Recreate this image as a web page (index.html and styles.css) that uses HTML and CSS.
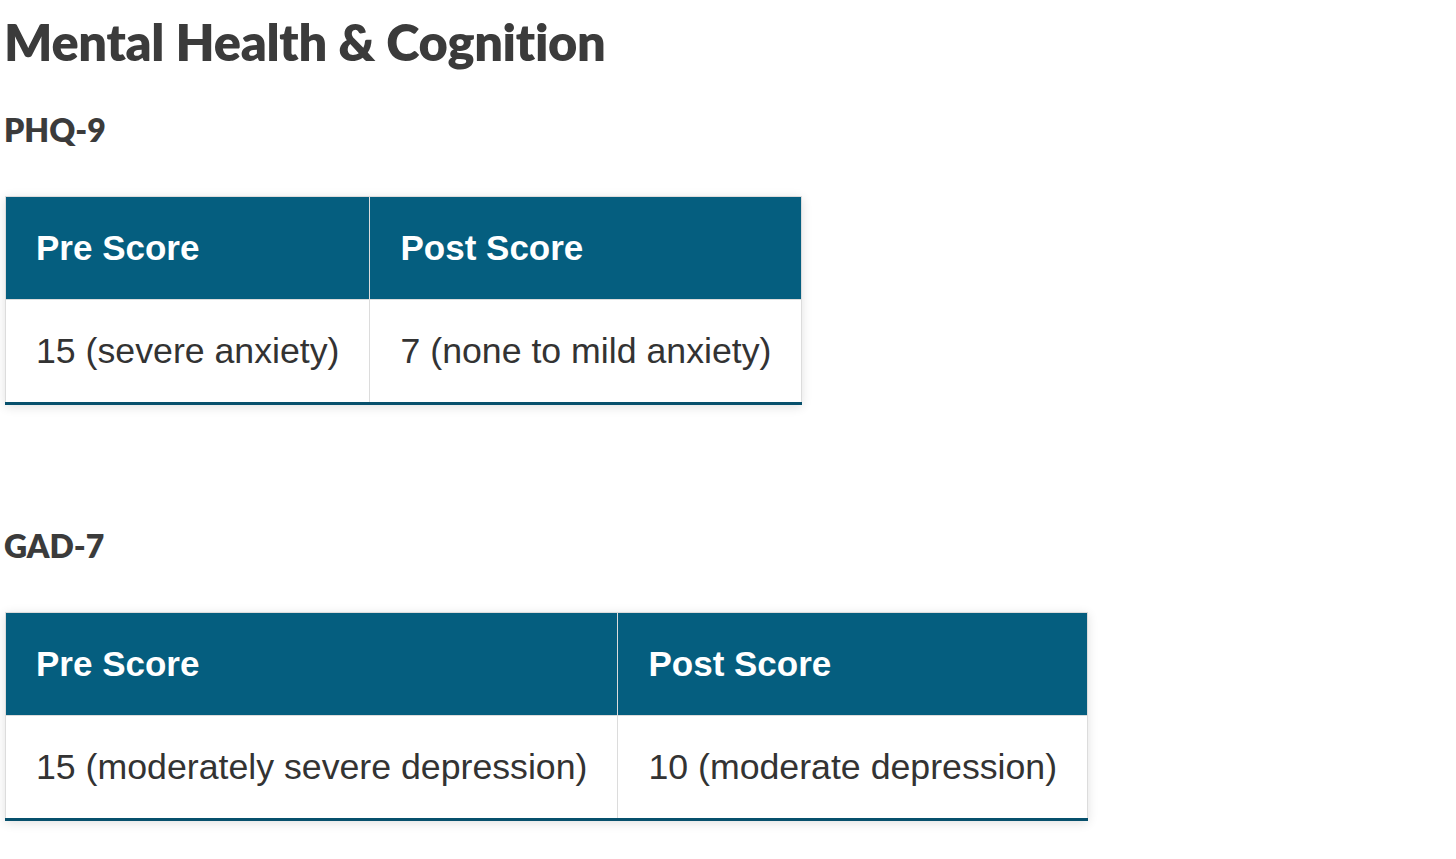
FILE: index.html
```html
<!DOCTYPE html>
<html lang="en">
<head>
<meta charset="utf-8">
<title>Mental Health &amp; Cognition</title>
<link rel="stylesheet" href="styles.css">
</head>
<body>
<main class="page">
  <h1 class="title">Mental Health &amp; Cognition</h1>
  <section class="block">
    <h2 class="subtitle">PHQ-9</h2>
    <table class="scores">
      <thead>
        <tr><th>Pre Score</th><th>Post Score</th></tr>
      </thead>
      <tbody>
        <tr><td>15 (severe anxiety)</td><td>7 (none to mild anxiety)</td></tr>
      </tbody>
    </table>
  </section>
  <section class="block block-second">
    <h2 class="subtitle">GAD-7</h2>
    <table class="scores">
      <thead>
        <tr><th>Pre Score</th><th>Post Score</th></tr>
      </thead>
      <tbody>
        <tr><td>15 (moderately severe depression)</td><td>10 (moderate depression)</td></tr>
      </tbody>
    </table>
  </section>
</main>
</body>
</html>
```
FILE: styles.css
```css
* { box-sizing: border-box; }
html, body { margin: 0; padding: 0; background: #ffffff; }
body { font-family: "Liberation Sans", Arial, sans-serif; color: #333333; }
.page { padding: 11px 5px 20px 4px; }
.title {
  font-family: Lato, "Open Sans", sans-serif;
  font-weight: 800;
  font-size: 50.5px;
  line-height: 62px;
  letter-spacing: -0.3px;
  color: #3b3b3b;
  margin: 0;
  font-variant-ligatures: none;
}
.subtitle {
  font-family: Lato, "Open Sans", sans-serif;
  font-weight: 800;
  font-size: 32px;
  line-height: 37px;
  color: #3b3b3b;
  margin: 0 0 48px 0;
}
.block { margin-top: 38px; }
.block-second { margin-top: 122px; }
.scores {
  border-collapse: collapse;
  box-shadow: 0 2px 10px rgba(0, 0, 0, 0.12);
  font-size: 35.7px;
  line-height: 42px;
  margin-left: 1px;
}
.scores th, .scores td {
  text-align: left;
  padding: 30px 30px;
  border: 1px solid #dcdcdc;
  white-space: nowrap;
}
.scores th {
  background: #055e7f;
  color: #ffffff;
  font-weight: 700;
  font-size: 35px;
}
.scores td {
  color: #333333;
  font-weight: 400;
  border-bottom: 3px solid #07506c;
}
```
